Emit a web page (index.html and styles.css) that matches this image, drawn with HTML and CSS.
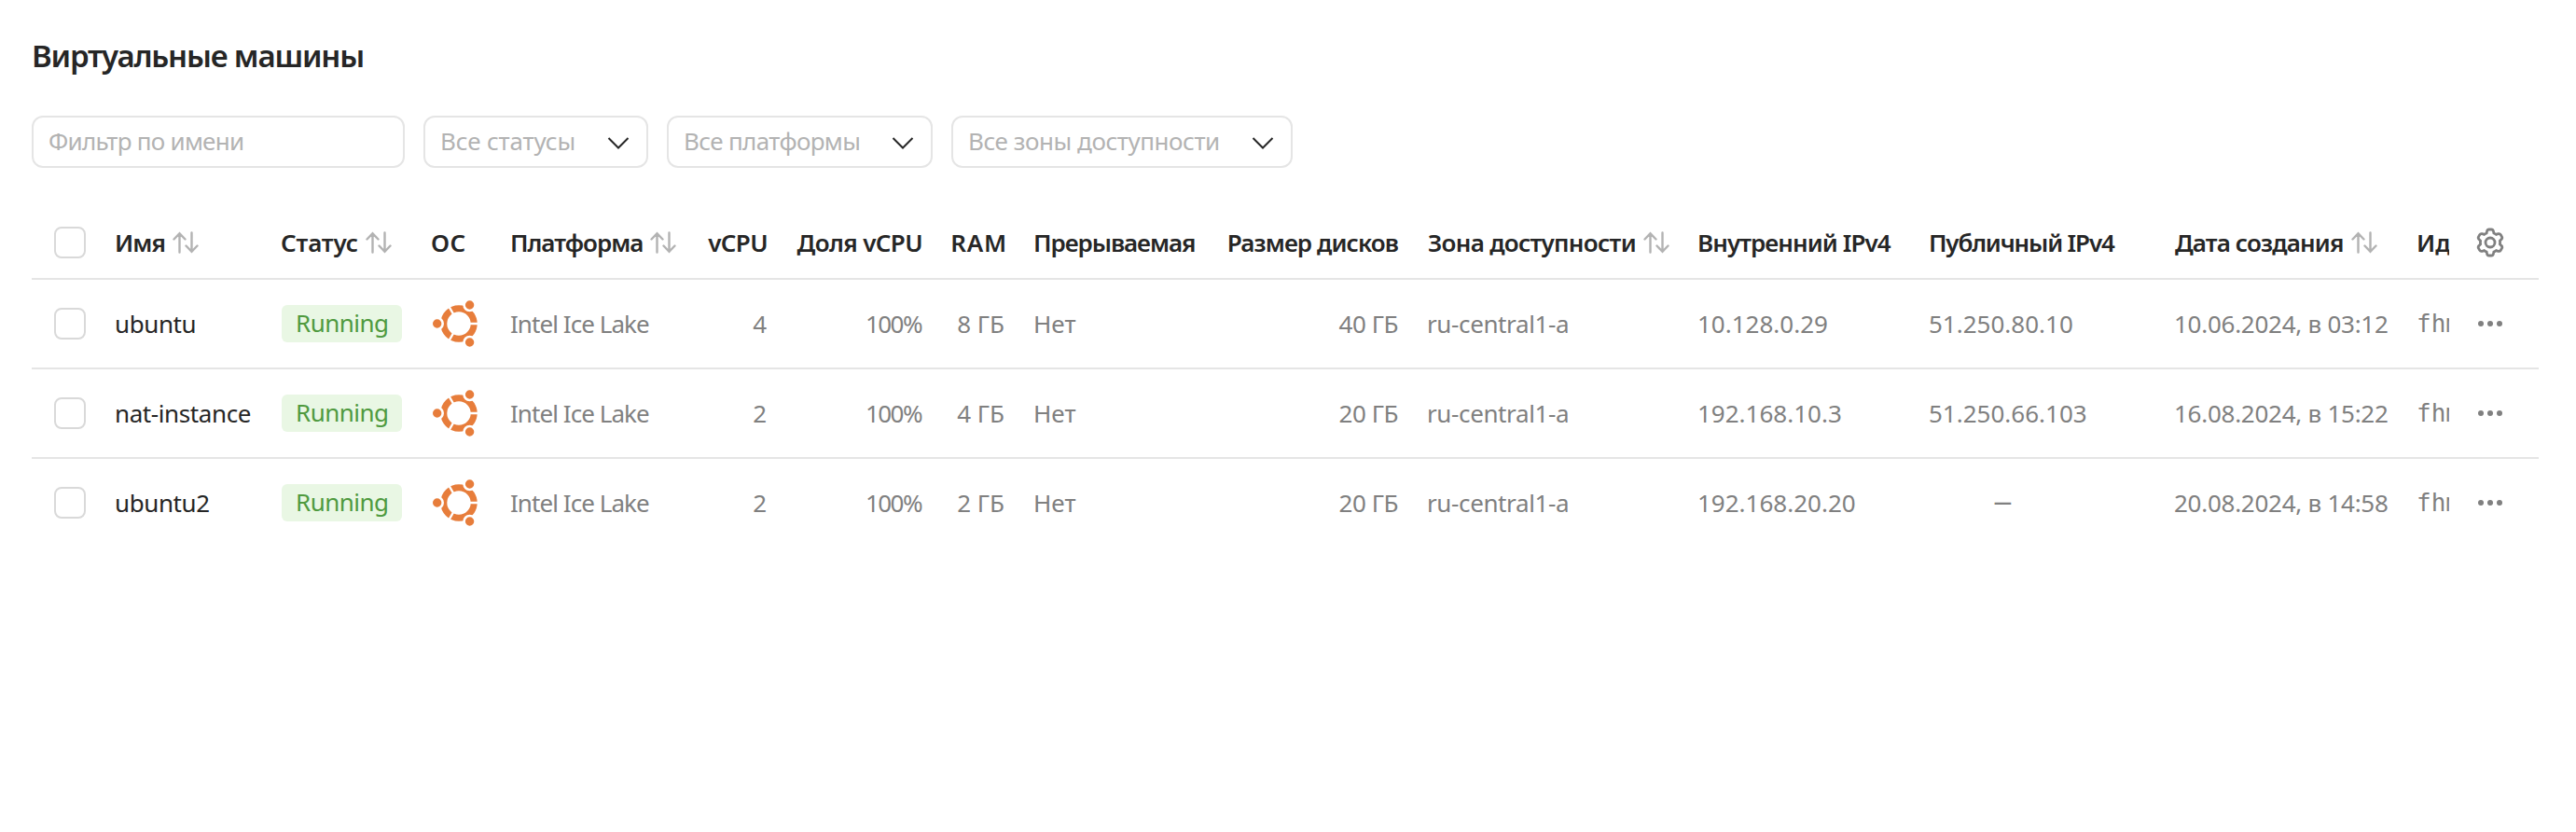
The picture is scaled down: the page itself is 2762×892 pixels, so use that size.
FILE: index.html
```
<!DOCTYPE html>
<html lang="ru">
<head>
<meta charset="utf-8">
<title>Виртуальные машины</title>
<link rel="stylesheet" href="styles.css">
</head>
<body>
<svg class="sprite" aria-hidden="true">
  <symbol id="sort" viewBox="0 0 28 24"><path d="M7.500 22.500V2.500M1.500 8.500l6-6.300 6 6.300M20.500 1.500v20M14.500 15.500l6 6.300 6-6.300"/></symbol>
  <symbol id="chevron" viewBox="0 0 24 16"><path d="M1.500 3 12 13.500 22.500 3"/></symbol>
  <symbol id="gear" viewBox="0 0 32 32">
    <path d="M12.600 3.800Q13 2 14.800 2H17.200Q19 2 19.400 3.800L19.900 6Q21.200 6.500 22.400 7.400L24.600 6.700Q26.400 6.200 27.300 7.700L28.500 9.800Q29.300 11.400 28 12.600L26.400 14.200Q26.700 16 26.400 17.800L28 19.400Q29.300 20.600 28.500 22.200L27.300 24.300Q26.400 25.800 24.600 25.300L22.400 24.600Q21.200 25.500 19.900 26L19.400 28.200Q19 30 17.200 30H14.800Q13 30 12.600 28.200L12.100 26Q10.800 25.500 9.600 24.600L7.400 25.300Q5.600 25.800 4.700 24.300L3.500 22.200Q2.700 20.600 4 19.400L5.600 17.800Q5.300 16 5.600 14.200L4 12.600Q2.700 11.400 3.500 9.800L4.700 7.700Q5.600 6.200 7.400 6.700L9.600 7.400Q10.800 6.500 12.100 6Z"/>
    <circle cx="16" cy="16" r="5"/>
  </symbol>
  <symbol id="ubuntu" viewBox="0 0 50 52">
    <circle class="ring" cx="29" cy="26" r="16.200"/>
    <path class="gap" d="M29 26H52M29 26 17.500 6.100M29 26 17.500 45.900"/>
    <g class="dots"><circle cx="5.700" cy="26" r="6"/><circle cx="40.600" cy="6" r="6"/><circle cx="40.600" cy="46" r="6"/></g>
  </symbol>
</svg>
<main class="page">
  <h1 class="title">Виртуальные машины</h1>
  <div class="filters">
    <div class="control control-name"><span class="ls-name">Фильтр по имени</span></div>
    <div class="control control-status"><span class="ls-status">Все статусы</span><svg class="chevron"><use href="#chevron"/></svg></div>
    <div class="control control-platform"><span class="ls-platform">Все платформы</span><svg class="chevron"><use href="#chevron"/></svg></div>
    <div class="control control-zone"><span class="ls-zone">Все зоны доступности</span><svg class="chevron"><use href="#chevron"/></svg></div>
  </div>
  <div class="table">
    <div class="row head">
      <div class="cell check"><i class="box"></i></div>
      <div class="cell h-name">Имя<svg class="sort"><use href="#sort"/></svg></div>
      <div class="cell h-status">Статус<svg class="sort"><use href="#sort"/></svg></div>
      <div class="cell h-os">ОС</div>
      <div class="cell h-platform">Платформа<svg class="sort"><use href="#sort"/></svg></div>
      <div class="cell num h-cpu">vCPU</div>
      <div class="cell num h-share">Доля vCPU</div>
      <div class="cell num h-ram">RAM</div>
      <div class="cell h-preempt">Прерываемая</div>
      <div class="cell num h-disk">Размер дисков</div>
      <div class="cell h-zone">Зона доступности<svg class="sort"><use href="#sort"/></svg></div>
      <div class="cell h-inner">Внутренний IPv4</div>
      <div class="cell h-public">Публичный IPv4</div>
      <div class="cell h-date">Дата создания<svg class="sort"><use href="#sort"/></svg></div>
      <div class="cell clip">Ид</div>
      <div class="cell actions"><svg class="gear"><use href="#gear"/></svg></div>
    </div>
    <div class="row">
      <div class="cell check"><i class="box"></i></div>
      <div class="cell name">ubuntu</div>
      <div class="cell"><span class="badge">Running</span></div>
      <div class="cell os"><svg class="ubuntu"><use href="#ubuntu"/></svg></div>
      <div class="cell platform">Intel Ice Lake</div>
      <div class="cell num">4</div>
      <div class="cell num share">100%</div>
      <div class="cell num">8 ГБ</div>
      <div class="cell">Нет</div>
      <div class="cell num disk">40 ГБ</div>
      <div class="cell zone">ru-central1-a</div>
      <div class="cell">10.128.0.29</div>
      <div class="cell">51.250.80.10</div>
      <div class="cell date">10.06.2024, в 03:12</div>
      <div class="cell clip mono">fhm</div>
      <div class="cell actions"><span class="more"><i></i><i></i><i></i></span></div>
    </div>
    <div class="row">
      <div class="cell check"><i class="box"></i></div>
      <div class="cell name">nat-instance</div>
      <div class="cell"><span class="badge">Running</span></div>
      <div class="cell os"><svg class="ubuntu"><use href="#ubuntu"/></svg></div>
      <div class="cell platform">Intel Ice Lake</div>
      <div class="cell num">2</div>
      <div class="cell num share">100%</div>
      <div class="cell num">4 ГБ</div>
      <div class="cell">Нет</div>
      <div class="cell num disk">20 ГБ</div>
      <div class="cell zone">ru-central1-a</div>
      <div class="cell">192.168.10.3</div>
      <div class="cell">51.250.66.103</div>
      <div class="cell date">16.08.2024, в 15:22</div>
      <div class="cell clip mono">fhm</div>
      <div class="cell actions"><span class="more"><i></i><i></i><i></i></span></div>
    </div>
    <div class="row">
      <div class="cell check"><i class="box"></i></div>
      <div class="cell name">ubuntu2</div>
      <div class="cell"><span class="badge">Running</span></div>
      <div class="cell os"><svg class="ubuntu"><use href="#ubuntu"/></svg></div>
      <div class="cell platform">Intel Ice Lake</div>
      <div class="cell num">2</div>
      <div class="cell num share">100%</div>
      <div class="cell num">2 ГБ</div>
      <div class="cell">Нет</div>
      <div class="cell num disk">20 ГБ</div>
      <div class="cell zone">ru-central1-a</div>
      <div class="cell">192.168.20.20</div>
      <div class="cell empty"><span class="dash">–</span></div>
      <div class="cell date">20.08.2024, в 14:58</div>
      <div class="cell clip mono">fhm</div>
      <div class="cell actions"><span class="more"><i></i><i></i><i></i></span></div>
    </div>
  </div>
</main>
</body>
</html>
```

FILE: styles.css
```
* { box-sizing: border-box; }
body {
  margin: 0;
  background: #fff;
  color: #262626;
  font: 26px/36px "Noto Sans", sans-serif;
}
.sprite { position: absolute; width: 0; height: 0; }
svg { display: block; flex: none; overflow: visible; }
.page { padding: 36px 40px 0 34px; }
.title {
  margin: 0 0 40px;
  font-size: 33px;
  line-height: 47px;
  height: 48px;
  font-weight: 600;
  letter-spacing: -1.2px;
}

.filters { display: flex; gap: 20px; margin-bottom: 42px; }
.control {
  display: flex;
  align-items: center;
  justify-content: space-between;
  height: 56px;
  padding: 0 18px 2px 16px;
  border: 2px solid #e5e5e5;
  border-radius: 12px;
  color: #b3b3b3;
  white-space: nowrap;
}
.control-name { width: 400px; }
.control-status { width: 241px; }
.control-platform { width: 285px; }
.control-zone { width: 366px; }
.ls-name { letter-spacing: -.74px; }
.ls-status { letter-spacing: -.15px; }
.ls-platform { letter-spacing: -.65px; }
.ls-zone { letter-spacing: -.45px; }
.chevron { width: 24px; height: 16px; fill: none; stroke: #262626; stroke-width: 2px; margin-top: 3px; }

.row {
  display: grid;
  grid-template-columns: 74px 178px 161px 85px 210px 96px 166px 89px 205px 217px 290px 248px 263px 260px 50px 96px;
  height: 96px;
  border-bottom: 2px solid #e5e5e5;
  color: #808080;
}
.row:last-child { border-bottom: 0; padding-bottom: 2px; }
.head { height: 78px; color: #262626; font-weight: 600; }
.cell {
  display: flex;
  align-items: center;
  min-width: 0;
  padding: 0 16px 0 15px;
  white-space: nowrap;
}
.num { justify-content: flex-end; }
.check { padding-left: 24px; }
.box { width: 34px; height: 34px; border: 2px solid #d9d9d9; border-radius: 8px; }
.sort { width: 28px; height: 24px; margin-left: 8px; fill: none; stroke: #b3b3b3; stroke-width: 2.400px; stroke-linecap: round; }
.h-name { letter-spacing: -.9px; }
.h-status { letter-spacing: -.15px; }
.h-os { letter-spacing: .5px; }
.h-platform { letter-spacing: -1px; }
.h-cpu { letter-spacing: -.6px; padding-right: 15px; }
.h-share { letter-spacing: -.6px; padding-right: 15px; }
.h-ram { letter-spacing: .800px; padding-right: 13px; }
.h-preempt { letter-spacing: -1.050px; }
.h-disk { letter-spacing: -.9px; }
.h-zone { letter-spacing: -.7px; padding-left: 16px; }
.h-inner { letter-spacing: -.92px; }
.h-public { letter-spacing: -1.170px; }
.h-date { letter-spacing: -.86px; padding-left: 16px; }

.name { color: #262626; letter-spacing: -.4px; }
.badge {
  width: 129px;
  height: 40px;
  margin-left: 1px;
  padding-left: 15px;
  border-radius: 6px;
  background: #e9f7e4;
  color: #4f9a3f;
  line-height: 39px;
  letter-spacing: -.53px;
}
.os { padding-left: 16px; }
.ubuntu { width: 50px; height: 52px; }
.ring { fill: none; stroke: #e77d3b; stroke-width: 7px; }
.gap { stroke: #fff; stroke-width: 2.400px; }
.dots { fill: #e77d3b; stroke: #fff; stroke-width: 2.600px; }
.platform { letter-spacing: -.94px; }
.share { letter-spacing: -1.540px; }
.disk { letter-spacing: -.43px; }
.zone { letter-spacing: -.38px; }
.date { letter-spacing: -.26px; }
.empty { justify-content: center; padding: 0 105px 4px 0; }
.dash { margin-left: 32px; transform: scaleX(1.600); font-weight: 500; }
.clip { padding-right: 0; overflow: hidden; }
.mono { padding-left: 15px; font-family: "DejaVu Sans Mono", monospace; }
.actions { padding-left: 28px; }
.gear { width: 32px; height: 32px; fill: none; stroke: #808080; stroke-width: 2.800px; }
.more { display: flex; gap: 4px; padding-left: 3px; }
.more i { width: 6px; height: 6px; border-radius: 50%; background: #808080; }
```
